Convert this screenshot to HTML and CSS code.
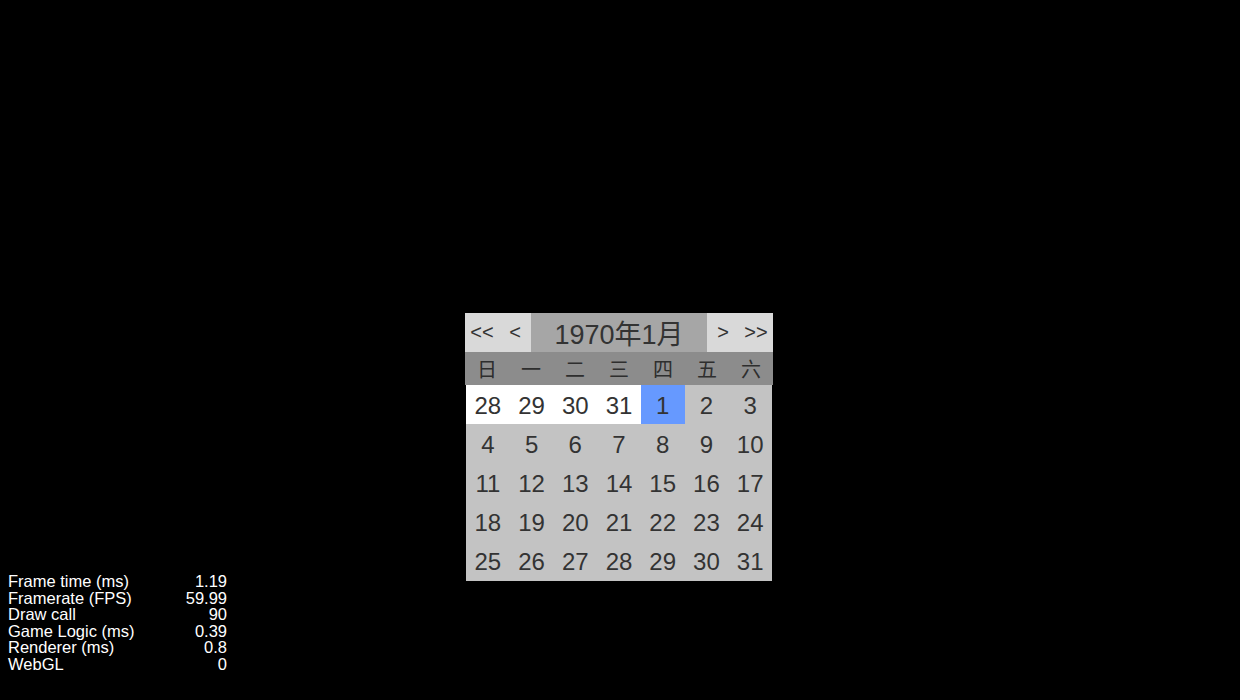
FILE: index.html
```html
<!DOCTYPE html>
<html lang="zh">
<head>
<meta charset="utf-8">
<title>Calendar</title>
<link rel="stylesheet" href="styles.css">
</head>
<body>
<div class="stage">
  <div class="calendar">
    <div class="cal-head">
      <div class="nav nav-wide">&lt;&lt;</div>
      <div class="nav">&lt;</div>
      <div class="title">1970年1月</div>
      <div class="nav">&gt;</div>
      <div class="nav nav-wide">&gt;&gt;</div>
    </div>
    <div class="weekdays">
      <span>日</span><span>一</span><span>二</span><span>三</span><span>四</span><span>五</span><span>六</span>
    </div>
    <div class="days">
      <span class="other">28</span><span class="other">29</span><span class="other">30</span><span class="other">31</span><span class="today">1</span><span>2</span><span>3</span>
      <span>4</span><span>5</span><span>6</span><span>7</span><span>8</span><span>9</span><span>10</span>
      <span>11</span><span>12</span><span>13</span><span>14</span><span>15</span><span>16</span><span>17</span>
      <span>18</span><span>19</span><span>20</span><span>21</span><span>22</span><span>23</span><span>24</span>
      <span>25</span><span>26</span><span>27</span><span>28</span><span>29</span><span>30</span><span>31</span>
    </div>
  </div>
</div>
<div class="stats">
  <div class="stat"><span>Frame time (ms)</span><span>1.19</span></div>
  <div class="stat"><span>Framerate (FPS)</span><span>59.99</span></div>
  <div class="stat"><span>Draw call</span><span>90</span></div>
  <div class="stat"><span>Game Logic (ms)</span><span>0.39</span></div>
  <div class="stat"><span>Renderer (ms)</span><span>0.8</span></div>
  <div class="stat"><span>WebGL</span><span>0</span></div>
</div>
</body>
</html>
```
FILE: styles.css
```css
html, body {
  margin: 0;
  padding: 0;
  background: #000;
  width: 1240px;
  height: 700px;
  overflow: hidden;
}
body {
  position: relative;
  font-family: "Liberation Sans", Arial, "Noto Sans CJK SC", sans-serif;
}
.stage {
  padding-top: 313px;
  padding-left: 465px;
}
.calendar {
  width: 308px;
  color: #333;
}
.cal-head {
  display: flex;
  height: 39px;
  background: #a6a6a6;
}
.nav {
  width: 32px;
  background: #d9d9d9;
  display: flex;
  align-items: center;
  justify-content: center;
  font-size: 20px;
  color: #333;
}
.nav-wide {
  width: 34px;
}
.title {
  flex: 1;
  display: flex;
  align-items: center;
  justify-content: center;
  font-size: 27px;
  color: #333;
}
.weekdays {
  display: grid;
  grid-template-columns: repeat(7, 1fr);
  height: 33px;
  background: #8c8c8c;
  font-family: "Noto Sans CJK SC", sans-serif;
  font-size: 20px;
}
.weekdays span {
  display: flex;
  align-items: center;
  justify-content: center;
  color: #2e2e2e;
}
.days {
  display: grid;
  grid-template-columns: repeat(7, 1fr);
  grid-template-rows: repeat(5, 1fr);
  height: 196px;
  margin: 0 1px;
  background: #c3c3c3;
  font-size: 24px;
}
.days span {
  display: flex;
  align-items: center;
  justify-content: center;
  padding-top: 2px;
  color: #333;
}
.days .other {
  background: #fff;
}
.days .today {
  background: #6699ff;
}
.stats {
  position: absolute;
  left: 8px;
  top: 573px;
  width: 219px;
  color: #fff;
  font-size: 16.5px;
  line-height: 16.5px;
}
.stat {
  display: flex;
  justify-content: space-between;
}
```
